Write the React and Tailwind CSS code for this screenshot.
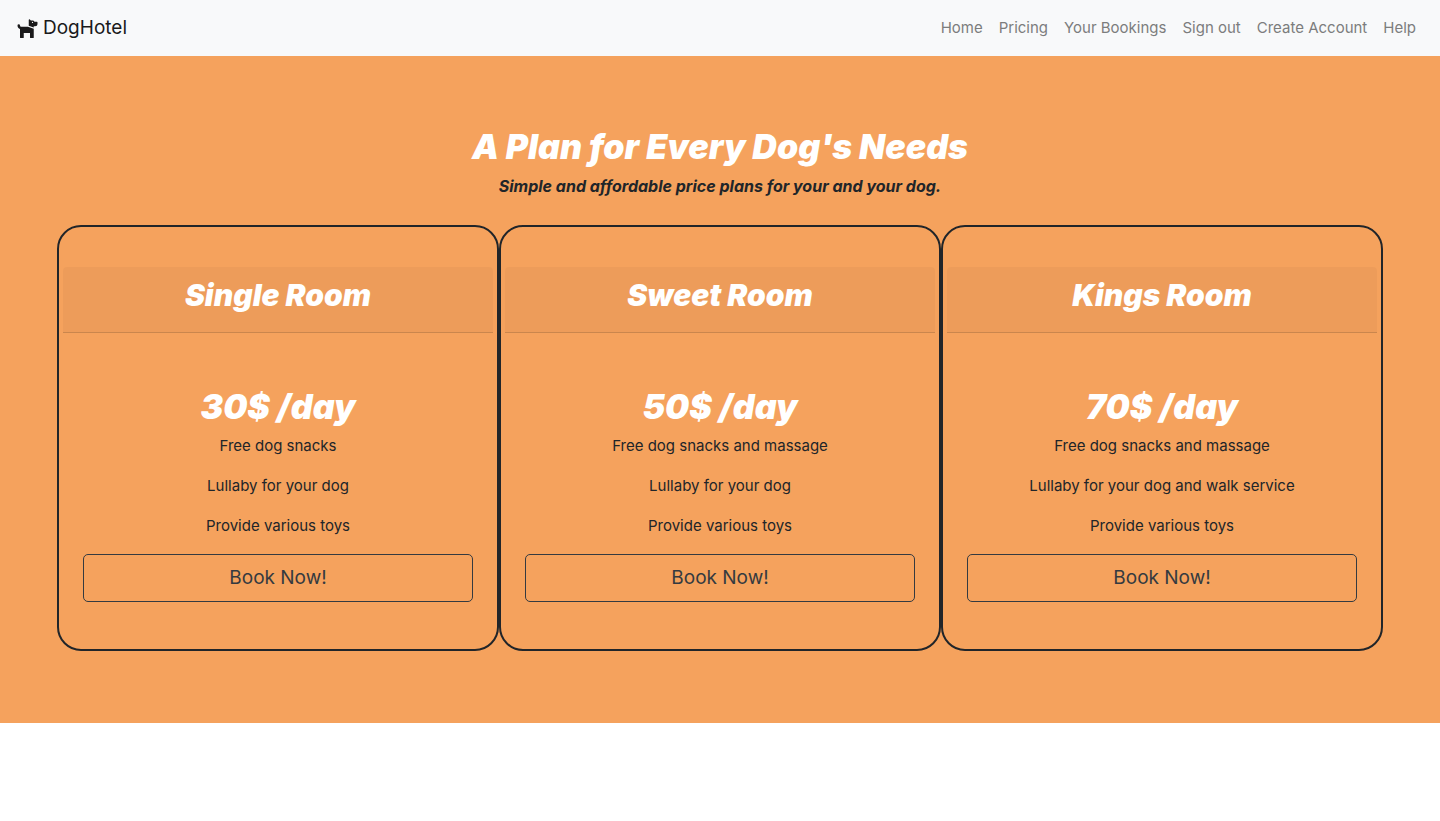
import React from "react";
import { FaDog } from "react-icons/fa";

const links = ["Home", "Pricing", "Your Bookings", "Sign out", "Create Account", "Help"];

const plans = [
  {
    name: "Single Room",
    price: "30$ /day",
    perks: ["Free dog snacks", "Lullaby for your dog", "Provide various toys"],
  },
  {
    name: "Sweet Room",
    price: "50$ /day",
    perks: ["Free dog snacks and massage", "Lullaby for your dog", "Provide various toys"],
  },
  {
    name: "Kings Room",
    price: "70$ /day",
    perks: [
      "Free dog snacks and massage",
      "Lullaby for your dog and walk service",
      "Provide various toys",
    ],
  },
];

function Navbar() {
  return (
    <nav className="flex h-14 items-center justify-between bg-[#f8f9fa] px-4">
      <a href="#home" className="flex items-center gap-1 text-[19px] leading-8 text-[#1a1a1b]">
        <FaDog className="h-5 w-[23px]" aria-hidden="true" />
        DogHotel
      </a>
      <ul className="flex">
        {links.map((label) => (
          <li key={label}>
            <a href="#" className="block px-2 py-2 text-[15px] leading-6 text-[#7c7d7d]">
              {label}
            </a>
          </li>
        ))}
      </ul>
    </nav>
  );
}

function PlanCard({ name, price, perks }) {
  return (
    <article className="rounded-3xl border-2 border-[#212529] px-1 pt-10 pb-7">
      <header className="rounded-t-sm border-b border-black/15 bg-black/3 px-5 pt-3 pb-5">
        <h3 className="text-[30px] leading-[33px] font-black text-white italic">{name}</h3>
      </header>
      <div className="px-5 pt-14 pb-[19px]">
        <h2 className="text-[34px] leading-9 font-black text-white italic">{price}</h2>
        <ul className="mt-[9px] mb-4 flex flex-col gap-4 text-[15px]">
          {perks.map((perk) => (
            <li key={perk}>{perk}</li>
          ))}
        </ul>
        <button
          type="button"
          className="block h-12 w-full rounded-[5px] border border-[#343a40] text-[19px] leading-8 text-[#343a40]"
        >
          Book Now!
        </button>
      </div>
    </article>
  );
}

export default function App() {
  return (
    <div className="font-['Inter',sans-serif] text-base leading-6 text-[#212529]">
      <Navbar />
      <main className="bg-[#f5a25d] px-[57px] py-[72px] text-center">
        <h1 className="text-[34px] leading-[38px] font-black text-white italic">
          A Plan for Every Dog's Needs
        </h1>
        <p className="mt-2 font-bold italic">Simple and affordable price plans for your and your dog.</p>
        <section className="mt-[27px] grid grid-cols-3">
          {plans.map((plan) => (
            <PlanCard key={plan.name} {...plan} />
          ))}
        </section>
      </main>
    </div>
  );
}
